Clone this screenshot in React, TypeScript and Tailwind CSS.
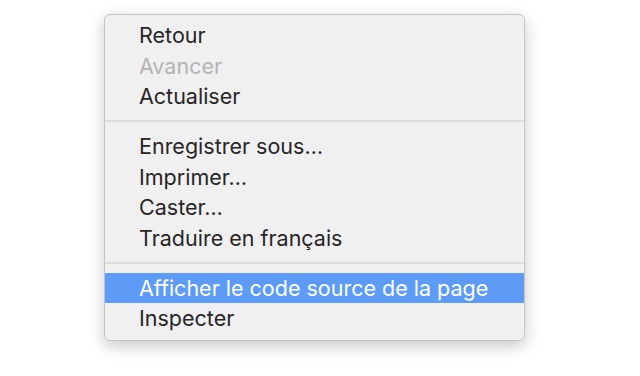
import React from "react";

type Item = { label: string; disabled?: boolean; active?: boolean } | "sep";

const items: Item[] = [
  { label: "Retour" },
  { label: "Avancer", disabled: true },
  { label: "Actualiser" },
  "sep",
  { label: "Enregistrer sous…" },
  { label: "Imprimer…" },
  { label: "Caster…" },
  { label: "Traduire en français" },
  "sep",
  { label: "Afficher le code source de la page", active: true },
  { label: "Inspecter" },
];

function ContextMenu() {
  return (
    <div className="ml-[104px] w-[421px] rounded-[6px] border border-[#c4c4c4] bg-[#f0f0f0] pt-[5px] pb-[6px] shadow-[0_5px_16px_rgba(0,0,0,0.22)] font-['Inter','Liberation_Sans',sans-serif]">
      {items.map((item, i) =>
        item === "sep" ? (
          <div key={i} className="flex h-[19.5px] items-center">
            <div className="h-[2px] w-full bg-[#dcdcdc]" />
          </div>
        ) : (
          <div
            key={i}
            className={
              "flex h-[30.5px] items-center pl-[34px] text-[21.5px] " +
              (item.active
                ? "bg-[#5d9bf7] text-white"
                : item.disabled
                ? "text-[#b4b4b4]"
                : "text-[#262626]")
            }
          >
            {item.label}
          </div>
        )
      )}
    </div>
  );
}

export default function App() {
  return (
    <div className="h-[376px] w-[640px] bg-white pt-[14px]">
      <ContextMenu />
    </div>
  );
}
